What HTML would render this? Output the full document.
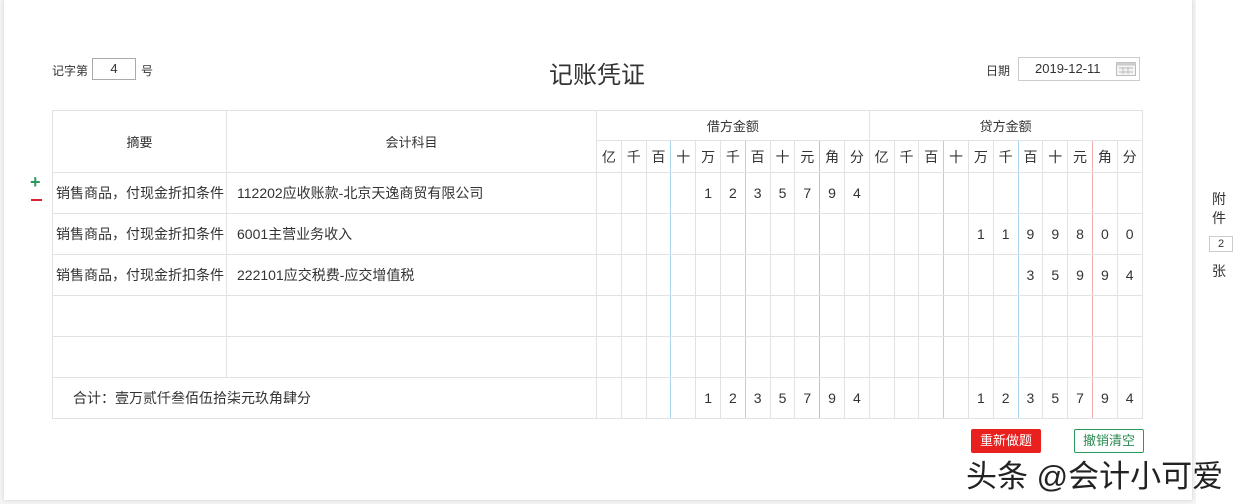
<!DOCTYPE html>
<html><head><meta charset="utf-8"><style>
body{margin:0;width:1243px;height:504px;background:#f4f4f4;font-family:"Liberation Sans","Noto Sans CJK SC",sans-serif;color:#333;position:relative;overflow:hidden}
.card{position:absolute;left:4px;top:0;width:1188px;height:500px;background:#fff;box-shadow:0 0 4px rgba(0,0,0,.15)}
.side{position:absolute;left:1196px;top:0;width:47px;height:504px;background:#fff}
.abs{position:absolute}
table{position:absolute;left:52px;top:110px;border-collapse:collapse;table-layout:fixed;font-size:14px}
td{border:1px solid #e2e2e2;padding:0;text-align:center;overflow:hidden;white-space:nowrap}
td.b{border-right:1px solid #a9d4f0}
td.r{border-right:1px solid #f0b0b0}
.l{text-align:left;padding-left:3px}
.l2{text-align:left;padding-left:10px}
.h{font-size:13px}
</style></head><body>
<div class="card"></div>
<div class="side"></div>
<div class="abs" style="left:52px;top:62px;font-size:12px">记字第</div>
<div class="abs" style="left:92px;top:58px;width:42px;height:20px;border:1px solid #aaa;text-align:center;font-size:13px;line-height:20px">4</div>
<div class="abs" style="left:141px;top:62px;font-size:12px">号</div>
<div class="abs" style="left:549px;top:55px;font-size:24px;color:#333">记账凭证</div>
<div class="abs" style="left:986px;top:62px;font-size:12px">日期</div>
<div class="abs" style="left:1018px;top:57px;width:120px;height:22px;border:1px solid #ccc;font-size:13px;line-height:22px"><span style="margin-left:16px">2019-12-11</span>
<svg style="position:absolute;right:3px;top:4px" width="20" height="14"><rect x="0.5" y="0.5" width="19" height="13" fill="#f4f4f4" stroke="#bbb"/><rect x="0.5" y="0.5" width="19" height="3" fill="#ccc"/><path d="M3 6h14M3 10h14M7 5v7M12 5v7" stroke="#bbb"/></svg></div>
<div class="abs" style="left:30px;top:172px;color:#2a9a5a;font-size:18px;font-weight:bold">+</div>
<div class="abs" style="left:31px;top:199px;width:11px;height:2px;background:#d23"></div>
<div class="abs" style="left:1212px;top:190px;font-size:14px;line-height:19px">附<br>件</div>
<div class="abs" style="left:1209px;top:236px;width:22px;height:14px;border:1px solid #ccc;font-size:11px;text-align:center;line-height:14px">2</div>
<div class="abs" style="left:1212px;top:261px;font-size:14px">张</div>
<table>
<colgroup><col style="width:174px"><col style="width:370px">
<col span="22" style="width:24.8px"></colgroup>
<tr style="height:30px" class="h"><td rowspan="2">摘要</td><td rowspan="2">会计科目</td><td colspan="11">借方金额</td><td colspan="11">贷方金额</td></tr>
<tr style="height:32px"><td>亿</td><td>千</td><td class="b">百</td><td>十</td><td>万</td><td class="b">千</td><td>百</td><td>十</td><td class="r">元</td><td>角</td><td>分</td><td>亿</td><td>千</td><td class="b">百</td><td>十</td><td>万</td><td class="b">千</td><td>百</td><td>十</td><td class="r">元</td><td>角</td><td>分</td></tr>
<tr style="height:41px"><td class="l">销售商品，付现金折扣条件</td><td class="l2">112202应收账款-北京天逸商贸有限公司</td><td></td><td></td><td class="b"></td><td></td><td>1</td><td class="b">2</td><td>3</td><td>5</td><td class="r">7</td><td>9</td><td>4</td><td></td><td></td><td class="b"></td><td></td><td></td><td class="b"></td><td></td><td></td><td class="r"></td><td></td><td></td></tr>
<tr style="height:41px"><td class="l">销售商品，付现金折扣条件</td><td class="l2">6001主营业务收入</td><td></td><td></td><td class="b"></td><td></td><td></td><td class="b"></td><td></td><td></td><td class="r"></td><td></td><td></td><td></td><td></td><td class="b"></td><td></td><td>1</td><td class="b">1</td><td>9</td><td>9</td><td class="r">8</td><td>0</td><td>0</td></tr>
<tr style="height:41px"><td class="l">销售商品，付现金折扣条件</td><td class="l2">222101应交税费-应交增值税</td><td></td><td></td><td class="b"></td><td></td><td></td><td class="b"></td><td></td><td></td><td class="r"></td><td></td><td></td><td></td><td></td><td class="b"></td><td></td><td></td><td class="b"></td><td>3</td><td>5</td><td class="r">9</td><td>9</td><td>4</td></tr>
<tr style="height:41px"><td></td><td></td><td></td><td></td><td class="b"></td><td></td><td></td><td class="b"></td><td></td><td></td><td class="r"></td><td></td><td></td><td></td><td></td><td class="b"></td><td></td><td></td><td class="b"></td><td></td><td></td><td class="r"></td><td></td><td></td></tr>
<tr style="height:41px"><td></td><td></td><td></td><td></td><td class="b"></td><td></td><td></td><td class="b"></td><td></td><td></td><td class="r"></td><td></td><td></td><td></td><td></td><td class="b"></td><td></td><td></td><td class="b"></td><td></td><td></td><td class="r"></td><td></td><td></td></tr>
<tr style="height:41px"><td colspan="2" class="l" style="padding-left:20px">合计：壹万贰仟叁佰伍拾柒元玖角肆分</td><td></td><td></td><td class="b"></td><td></td><td>1</td><td class="b">2</td><td>3</td><td>5</td><td class="r">7</td><td>9</td><td>4</td><td></td><td></td><td class="b"></td><td></td><td>1</td><td class="b">2</td><td>3</td><td>5</td><td class="r">7</td><td>9</td><td>4</td></tr>
</table>
<div class="abs" style="left:971px;top:429px;width:70px;height:24px;background:#e8211f;color:#fff;font-size:13px;line-height:24px;text-align:center;border-radius:2px">重新做题</div>
<div class="abs" style="left:1074px;top:429px;width:68px;height:22px;border:1px solid #2a9a5a;color:#2a8a50;font-size:13px;line-height:22px;text-align:center;border-radius:2px">撤销清空</div>
<div class="abs" style="left:966px;top:451px;font-size:31px;color:#222;text-shadow:1px 1px 0 #fff,-1px -1px 0 #fff">头条 @会计小可爱</div>
</body></html>
